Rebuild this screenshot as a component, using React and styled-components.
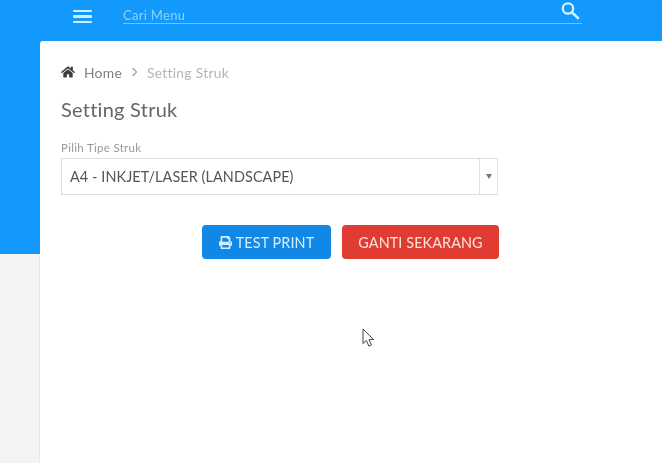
import React from "react";
import styled, { createGlobalStyle } from "styled-components";
import { FaHome, FaPrint } from "react-icons/fa";

const GlobalStyle = createGlobalStyle`
  html, body {
    margin: 0;
    padding: 0;
    height: 100%;
    overflow: hidden;
    background: #f4f4f4;
  }
  #root {
    height: 100%;
  }
  * {
    box-sizing: border-box;
  }
`;

const Page = styled.div`
  position: relative;
  display: flex;
  flex-direction: column;
  width: 662px;
  height: 463px;
  overflow: hidden;
  font-family: "Lato", "Open Sans", sans-serif;
  color: #555;
  filter: blur(0.35px);
`;

const Topbar = styled.header`
  display: flex;
  flex: 0 0 41px;
  align-items: flex-start;
  padding-left: 73px;
  background: #1299fb;
`;

const MenuButton = styled.div`
  display: flex;
  flex-direction: column;
  gap: 3px;
  width: 19px;
  margin-top: 10px;
  margin-right: 31px;
`;

const MenuBar = styled.span`
  display: block;
  height: 2.4px;
  border-radius: 1px;
  background: #cfeeff;
`;

const SearchBox = styled.div`
  display: flex;
  align-items: flex-start;
  justify-content: space-between;
  width: 459px;
  height: 24px;
  border-bottom: 1px solid #6cc4fd;
`;

const SearchText = styled.span`
  margin-top: 7px;
  font-size: 13px;
  line-height: 16px;
  letter-spacing: 0.3px;
  color: #8bd4fe;
`;

const SearchIcon = styled.svg`
  width: 20px;
  height: 20px;
  margin-right: 2px;
  margin-top: 1px;
`;

const Body = styled.div`
  display: flex;
  flex: 1;
  min-height: 0;
`;

const Gutter = styled.div`
  display: flex;
  flex: 0 0 40px;
  flex-direction: column;
`;

const GutterBlue = styled.div`
  flex: 0 0 213px;
  background: #1299fb;
`;

const GutterGray = styled.div`
  flex: 1;
  background: #f3f3f3;
  border-right: 1px solid #e6e6e6;
`;

const Card = styled.main`
  position: relative;
  flex: 1;
  padding: 23px 21px 0 21px;
  background: #fff;
`;

const CardCorner = styled.div`
  position: absolute;
  top: 0;
  left: 0;
  width: 4px;
  height: 4px;
  background: #fff;
  border-top-left-radius: 3px;
  box-shadow: -1px -1px 0 0 #1299fb;
`;

const Breadcrumb = styled.nav`
  display: flex;
  align-items: center;
  height: 16px;
  font-size: 13.8px;
  letter-spacing: 0.3px;
`;

const HomeIcon = styled(FaHome)`
  width: 14px;
  height: 14px;
  margin-right: 9px;
  color: #3d3d3d;
`;

const Crumb = styled.span`
  color: ${({ $muted }) => ($muted ? "#b4b4b4" : "#7f7f7f")};
`;

const CrumbSeparator = styled.svg`
  width: 7px;
  height: 10px;
  margin: 0 9px;
`;

const Title = styled.h1`
  margin: 17px 0 0;
  font-size: 20px;
  font-weight: 400;
  line-height: 24px;
  letter-spacing: 0.25px;
  color: #666;
`;

const FieldLabel = styled.label`
  display: block;
  margin-top: 20px;
  font-size: 11.5px;
  line-height: 14px;
  letter-spacing: 0.3px;
  color: #9a9a9a;
`;

const Select = styled.div`
  display: flex;
  align-items: stretch;
  width: 437px;
  height: 37px;
  margin-top: 3px;
  border: 1px solid #dfdfdf;
`;

const SelectValue = styled.div`
  display: flex;
  flex: 1;
  align-items: center;
  padding-left: 8px;
  font-size: 14.4px;
  letter-spacing: 0.1px;
  color: #555;
`;

const SelectArrow = styled.div`
  display: flex;
  flex: 0 0 18px;
  align-items: center;
  justify-content: center;
  border-left: 1px solid #dfdfdf;
  &::after {
    content: "";
    border-top: 5px solid #777;
    border-left: 3px solid transparent;
    border-right: 3px solid transparent;
  }
`;

const Actions = styled.div`
  display: flex;
  gap: 11px;
  width: 438px;
  margin-top: 30px;
  justify-content: flex-end;
`;

const Button = styled.button`
  display: flex;
  align-items: center;
  justify-content: center;
  gap: 4px;
  width: ${({ $width }) => $width}px;
  height: 34px;
  padding: 0;
  border: 0;
  border-radius: 4px;
  font-family: inherit;
  font-size: 14.4px;
  letter-spacing: 0.1px;
  color: ${({ $danger }) => ($danger ? "#fde3df" : "#d5eeff")};
  background: ${({ $danger }) => ($danger ? "#e03c32" : "#1188e6")};
`;

const PrintIcon = styled(FaPrint)`
  width: 13px;
  height: 13px;
`;

const Cursor = styled.svg`
  position: absolute;
  left: 362px;
  top: 328px;
  width: 14px;
  height: 21px;
`;

const App = () => (
  <Page>
    <GlobalStyle />
    <Topbar>
      <MenuButton>
        <MenuBar />
        <MenuBar />
        <MenuBar />
      </MenuButton>
      <SearchBox>
        <SearchText>Cari Menu</SearchText>
        <SearchIcon viewBox="0 0 20 20" fill="none" stroke="#d3f0ff">
          <circle cx="8" cy="7.5" r="5.2" strokeWidth="2.2" />
          <path d="M12 11.5l6 5.5" strokeWidth="2.6" strokeLinecap="round" />
        </SearchIcon>
      </SearchBox>
    </Topbar>
    <Body>
      <Gutter>
        <GutterBlue />
        <GutterGray />
      </Gutter>
      <Card>
        <CardCorner />
        <Breadcrumb>
          <HomeIcon />
          <Crumb>Home</Crumb>
          <CrumbSeparator viewBox="0 0 7 10" fill="none" stroke="#a8a8a8" strokeWidth="1.4">
            <path d="M1.5 1l4 4-4 4" />
          </CrumbSeparator>
          <Crumb $muted>Setting Struk</Crumb>
        </Breadcrumb>
        <Title>Setting Struk</Title>
        <FieldLabel>Pilih Tipe Struk</FieldLabel>
        <Select>
          <SelectValue>A4 - INKJET/LASER (LANDSCAPE)</SelectValue>
          <SelectArrow />
        </Select>
        <Actions>
          <Button $width={129}>
            <PrintIcon />
            TEST PRINT
          </Button>
          <Button $width={157} $danger>
            GANTI SEKARANG
          </Button>
        </Actions>
      </Card>
    </Body>
    <Cursor viewBox="0 0 14 21" fill="#fff" stroke="#444" strokeWidth="1">
      <path d="M1 1v14.5l3.4-3 2.4 5.6 2.6-1.1-2.4-5.4h4.6z" />
    </Cursor>
  </Page>
);

export default App;
